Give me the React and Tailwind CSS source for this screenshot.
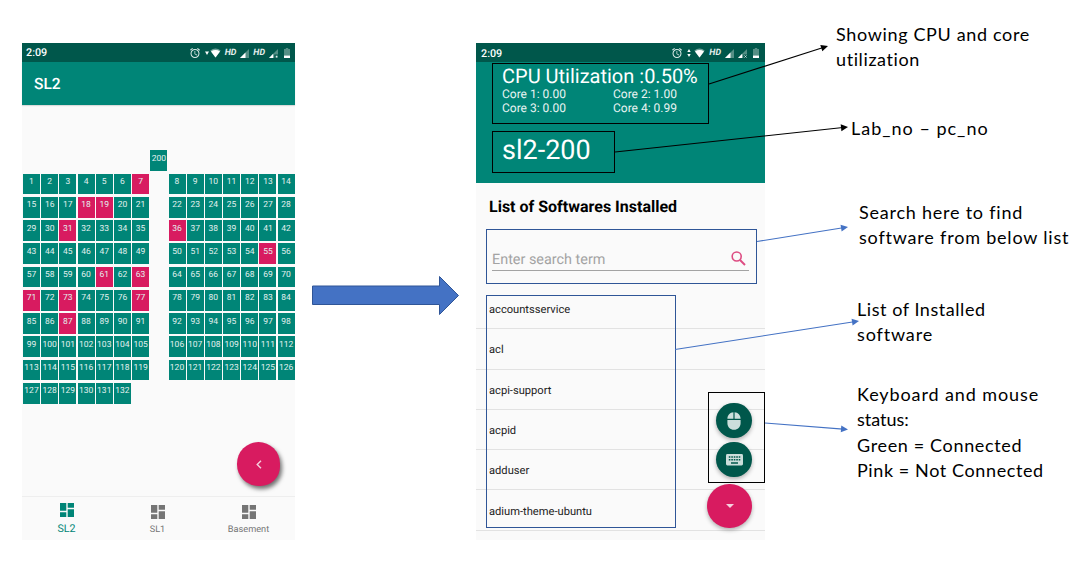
import React from "react";

const OFFLINE = new Set([7, 18, 19, 31, 36, 55, 61, 63, 71, 73, 77, 87]);
const PACKAGES = ["accountsservice", "acl", "acpi-support", "acpid", "adduser", "adium-theme-ubuntu"];

const range = (from, count) => Array.from({ length: count }, (_, i) => from + i);

const SEAT_ROWS = [
  [...Array(7).fill(null), 200, ...Array(7).fill(null)],
  ...range(0, 9).map((r) => [...range(r * 14 + 1, 7), null, ...range(r * 14 + 8, 7)]),
  [...range(127, 6), ...Array(9).fill(null)],
];

function Alarm() {
  return (
    <svg className="h-[12px] w-[12px]" viewBox="0 0 24 24" fill="#dcebe8">
      <path d="M22 5.72l-4.6-3.86-1.29 1.53 4.6 3.86L22 5.72zM7.88 3.39L6.6 1.86 2 5.71l1.29 1.53 4.59-3.85zM12.5 8H11v6l4.75 2.85.75-1.23-4-2.37V8zM12 4c-4.97 0-9 4.03-9 9s4.02 9 9 9a9 9 0 0 0 0-18zm0 16c-3.87 0-7-3.13-7-7s3.13-7 7-7 7 3.13 7 7-3.13 7-7 7z" />
    </svg>
  );
}

function Wifi() {
  return (
    <svg className="h-[10px] w-[11px]" viewBox="0 0 11 10">
      <path d="M0.3 2.4Q5.5-1.6 10.7 2.4L5.5 9.4Z" fill="#6fa39a" />
      <path d="M1 3.4Q5.5 0.6 10 3.4L5.5 9.4Z" fill="#fff" />
    </svg>
  );
}

function Signal({ weak, cross }) {
  return (
    <svg className="h-[9px] w-[9px]" viewBox="0 0 9 9">
      <path d="M9 0V9H0Z" fill="#548f85" />
      <path d={weak ? "M4.2 4.8V9H0Z" : "M5.5 3.5V9H0Z"} fill="#fff" />
      {weak && <path d="M5.3 5.5H9V9H5.3Z" fill="#00574b" />}
      {weak && (cross
        ? <path d="M6.4 6.4L8.6 8.6M8.6 6.4L6.4 8.6" stroke="#dcebe8" strokeWidth="0.8" />
        : <path d="M6.7 6.7H8.5V8.6H6.7Z" fill="#dcebe8" />)}
    </svg>
  );
}

function Battery() {
  return (
    <svg className="h-[10px] w-[6px]" viewBox="0 0 6 10">
      <path d="M1.8 0H4.2V1H6V10H0V1H1.8Z" fill="#548f85" />
      <path d="M0 7.6H6V10H0Z" fill="#fff" />
    </svg>
  );
}

function Hd() {
  return <span className="text-[8.9px] leading-none font-bold italic text-[#e4efed]">HD</span>;
}

function Clock() {
  return <span className="pt-[2px] text-[10.8px] leading-none font-medium">2:09</span>;
}

function Dashboard() {
  return (
    <svg className="h-[14px] w-[14px]" viewBox="0 0 14 14" fill="currentColor">
      <path d="M0 0H6.3V7.7H0ZM7.7 0H14V4.8H7.7ZM0 9.3H6.3V14H0ZM7.7 6.3H14V14H7.7Z" />
    </svg>
  );
}

function Seat({ id }) {
  if (id === null) return <div />;
  return (
    <div
      className={
        "ml-[1px] h-[20.7px] w-[17px] pt-[3.6px] text-center text-[8.5px] leading-[10px] text-[#e3f1ef] " +
        (OFFLINE.has(id) ? "bg-[#d81b60]" : "bg-[#008577]")
      }
    >
      <span className="-mx-1 block">{id}</span>
    </div>
  );
}

function Tab({ label, active }) {
  return (
    <div className={"relative -left-px flex flex-1 flex-col items-center " + (active ? "pt-[6px] text-[#008577]" : "pt-[8px] text-[#757575]")}>
      <Dashboard />
      <span className={active ? "mt-[5px] text-[10.7px] leading-[14px]" : "mt-[5px] text-[9.2px] leading-[12px]"}>{label}</span>
    </div>
  );
}

function LabPhone() {
  return (
    <section className="relative mt-[43px] ml-[22px] flex h-[497px] w-[273px] shrink-0 flex-col bg-[#fafafa] [text-rendering:geometricPrecision]">
      <header className="flex h-[19px] items-center bg-[#00574b] pr-[5px] pl-[4px] text-white">
        <Clock />
        <div className="ml-auto flex items-center pt-[1px]">
          <Alarm />
          <svg className="ml-[4px] h-[4px] w-[4px]" viewBox="0 0 4 4"><path d="M0 0.5H4L2 4Z" fill="#fff" /></svg>
          <span className="ml-[1px]"><Wifi /></span>
          <span className="ml-[4px] flex"><Hd /></span>
          <span className="ml-[4px]"><Signal /></span>
          <span className="ml-[4px] flex"><Hd /></span>
          <span className="ml-[4px]"><Signal weak /></span>
          <span className="ml-[6px]"><Battery /></span>
        </div>
      </header>
      <h1 className="flex h-[43px] items-center bg-[#008577] pt-[3px] pl-[12px] text-[15.5px] font-medium text-white shadow-[0_1px_1px_rgba(0,0,0,0.12)]">SL2</h1>
      <main className="flex-1 pt-[45.4px]">
        <div className="grid grid-cols-[repeat(15,18.2px)] auto-rows-[23.25px]">
          {SEAT_ROWS.flat().map((id, i) => <Seat key={i} id={id} />)}
        </div>
      </main>
      <nav className="flex h-[44px] border-t border-[#eeeeee]">
        <Tab label="SL2" active />
        <Tab label="SL1" />
        <Tab label="Basement" />
      </nav>
      <button className="absolute top-[399px] left-[215px] flex h-[44px] w-[43px] items-center justify-center rounded-[22px_22px_20px_22px] bg-[#d81b60] shadow-[2px_3px_4px_rgba(0,0,0,0.55)]">
        <svg className="h-[9px] w-[6px]" viewBox="0 0 6 9"><path d="M5 0.7L1.2 4.5L5 8.3" fill="none" stroke="#f5d0de" strokeWidth="1.4" /></svg>
      </button>
    </section>
  );
}

function PcPhone() {
  return (
    <section className="relative mt-[43px] ml-[181px] flex h-[497px] w-[289px] shrink-0 flex-col bg-[#fafafa] [text-rendering:geometricPrecision]">
      <header className="flex h-[19px] items-center bg-[#00574b] pt-[1px] pr-[6px] pl-[5px] text-white">
        <Clock />
        <div className="ml-auto flex items-center">
          <Alarm />
          <svg className="ml-[4px] h-[8px] w-[4px]" viewBox="0 0 4 8"><path d="M0.3 3L2 0L3.7 3ZM0.3 5L2 8L3.7 5Z" fill="#fff" /></svg>
          <span className="ml-[3px]"><Wifi /></span>
          <span className="ml-[4px] flex"><Hd /></span>
          <span className="ml-[4px]"><Signal /></span>
          <span className="ml-[4px]"><Signal weak cross /></span>
          <span className="ml-[6px]"><Battery /></span>
        </div>
      </header>
      <div className="h-[121px] bg-[#008577] pl-[26px] text-white">
        <p className="pt-[2px] text-[20px] leading-[24px] whitespace-nowrap">CPU Utilization :0.50%</p>
        <div className="grid w-[222px] grid-cols-2 text-[12px] leading-[13.6px] text-[#e9f4f3]">
          <span>Core 1: 0.00</span>
          <span>Core 2: 1.00</span>
          <span>Core 3: 0.00</span>
          <span>Core 4: 0.99</span>
        </div>
        <p className="mt-[17px] text-[27px] leading-[36px]">sl2-200</p>
      </div>
      <h2 className="mt-[14px] ml-[13px] text-[16px] leading-[20px] font-bold text-black">List of Softwares Installed</h2>
      <div className="mt-[29px] ml-[16px] flex h-[25px] w-[257px] items-start border-b border-[#a3a3a3] text-[#a3a3a3]">
        <span className="pt-[5px] text-[14.4px] leading-[18px]">Enter search term</span>
        <svg className="mt-[5px] mr-[3px] ml-auto h-[15px] w-[15px]" viewBox="0 0 15 15" fill="none" stroke="#dd4c82" strokeWidth="1.6">
          <circle cx="5.7" cy="5.5" r="4.5" />
          <path d="M9 9L14 14" strokeWidth="1.9" />
        </svg>
      </div>
      <ul className="mt-[18px]">
        {PACKAGES.map((name) => (
          <li key={name} className="flex h-[40.3px] items-center border-b border-[#e2e2e2] pt-[3.5px] pl-[13px] text-[11.15px] text-[#222]">{name}</li>
        ))}
      </ul>
      <div className="absolute top-[360px] left-[231px] flex w-[45px] flex-col items-end">
        <button className="flex h-[35px] w-[36px] items-center justify-center rounded-full bg-[#00574b] shadow-[0_2px_4px_rgba(0,0,0,0.3)]">
          <svg className="h-[18px] w-[14px]" viewBox="0 0 14 18" fill="#ccdedb">
            <path d="M6.4 0.2V6.7H0.4C0.4 3.2 3 0.4 6.4 0.2ZM7.6 0.2C11 0.4 13.6 3.2 13.6 6.7H7.6ZM0.4 8H13.6V11.2C13.6 15 10.7 17.7 7 17.7S0.4 15 0.4 11.2Z" />
          </svg>
        </button>
        <button className="mt-[4px] flex h-[35px] w-[36px] items-center justify-center rounded-full bg-[#00574b] shadow-[0_2px_4px_rgba(0,0,0,0.3)]">
          <svg className="h-[12px] w-[17px]" viewBox="0 0 17 12">
            <rect width="17" height="11.5" rx="1.4" fill="#ccdedb" />
            <path d="M2.8 3H14.3M2.8 5.7H14.3" stroke="#00574b" strokeWidth="1.6" strokeDasharray="1.6 0.88" />
            <path d="M5 9H12" stroke="#00574b" strokeWidth="1.5" />
          </svg>
        </button>
        <button className="mt-[7px] flex h-[44px] w-[45px] items-center justify-center rounded-full bg-[#d81b60] shadow-[0_2px_4px_rgba(0,0,0,0.3)]">
          <svg className="h-[4px] w-[8px]" viewBox="0 0 8 4"><path d="M0 0H8L4 4Z" fill="#f5d0de" /></svg>
        </button>
      </div>
      <div className="absolute top-[20px] left-[16px] h-[61px] w-[217px] border border-black" />
      <div className="absolute top-[88px] left-[16px] h-[42px] w-[123px] border border-black" />
      <div className="absolute top-[186px] left-[10px] h-[55px] w-[271px] border border-[#2f5597]" />
      <div className="absolute top-[252px] left-[10px] h-[233px] w-[190px] border border-[#2f5597]" />
      <div className="absolute top-[349px] left-[232px] h-[91px] w-[57px] border border-black" />
    </section>
  );
}

function Connector({ x1, y1, x2, y2, color }) {
  const length = Math.hypot(x2 - x1, y2 - y1);
  const angle = (Math.atan2(y2 - y1, x2 - x1) * 180) / Math.PI;
  return (
    <g transform={`translate(${x1} ${y1}) rotate(${angle})`}>
      <path d={`M0 0H${length - 5}`} stroke={color} strokeWidth="1.1" />
      <path d={`M${length} 0l-7 -3.4v6.8z`} fill={color} />
    </g>
  );
}

function Note({ className, lines }) {
  return (
    <div className={"absolute font-['Lato',sans-serif] text-[18px] leading-[25.3px] whitespace-nowrap text-black " + className}>
      {lines.map(([text, spacing]) => (
        <p key={text} className={spacing}>{text}</p>
      ))}
    </div>
  );
}

export default function App() {
  return (
    <div className="relative flex h-[569px] w-[1081px] items-start overflow-hidden bg-white font-['Roboto',sans-serif]">
      <LabPhone />
      <PcPhone />
      <svg className="pointer-events-none absolute inset-0 h-[569px] w-[1081px]" viewBox="0 0 1081 569">
        <path d="M312.5 286H439.5V276.5L458.5 295.5L439.5 314.5V304.5H312.5Z" fill="#4472c4" stroke="#2f5597" strokeWidth="1" />
        <Connector x1={709} y1={84} x2={828} y2={46} color="#000" />
        <Connector x1={615} y1={152} x2={848} y2={127} color="#000" />
        <Connector x1={757} y1={241.5} x2={848} y2={227} color="#4472c4" />
        <Connector x1={675} y1={349.5} x2={859} y2={321} color="#4472c4" />
        <Connector x1={765} y1={423} x2={848} y2={429.5} color="#4472c4" />
      </svg>
      <Note className="top-[22px] left-[836px]" lines={[["Showing CPU and core", "tracking-[0.65px]"], ["utilization", "tracking-[0.6px]"]]} />
      <Note className="top-[116px] left-[851px]" lines={[["Lab_no – pc_no", "tracking-[1px]"]]} />
      <Note className="top-[200px] left-[859px]" lines={[["Search here to find", "tracking-[0.77px]"], ["software from below list", "tracking-[0.8px]"]]} />
      <Note className="top-[297px] left-[857px]" lines={[["List of Installed", "tracking-[0.55px]"], ["software", "tracking-[0.85px]"]]} />
      <Note
        className="top-[382px] left-[857px]"
        lines={[
          ["Keyboard and mouse", "tracking-[0.9px]"],
          ["status:", "tracking-[0px]"],
          ["Green = Connected", "tracking-[0.65px]"],
          ["Pink = Not Connected", "tracking-[0.6px]"],
        ]}
      />
    </div>
  );
}
